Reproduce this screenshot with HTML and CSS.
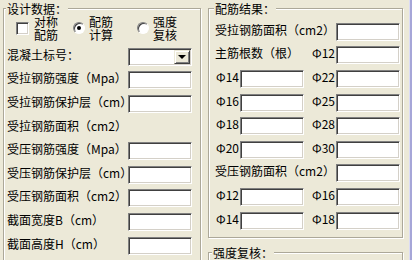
FILE: index.html
```html
<!DOCTYPE html>
<html lang="zh-CN">
<head>
    <meta charset="UTF-8">
    <meta name="viewport" content="width=device-width, initial-scale=1.0">
    <title>配筋计算</title>
    <link rel="stylesheet" href="styles.css">
</head>
<body>
    <div class="window">
        <fieldset class="group group-design">
            <legend>设计数据：</legend>
            <div class="options">
                <label class="option"><span class="check"></span><span class="option-text">对称<br>配筋</span></label>
                <label class="option"><span class="radio checked"></span><span class="option-text">配筋<br>计算</span></label>
                <label class="option"><span class="radio"></span><span class="option-text">强度<br>复核</span></label>
            </div>

            <div class="form">
                <span class="label">混凝土标号：</span>
                <span class="field combo"><span class="combo-btn"><span class="arrow"></span></span></span>

                <span class="label">受拉钢筋强度（Mpa）</span>
                <span class="field"></span>

                <span class="label">受拉钢筋保护层（cm）</span>
                <span class="field"></span>

                <span class="label wide">受拉钢筋面积（cm2）</span>

                <span class="label">受压钢筋强度（Mpa）</span>
                <span class="field"></span>

                <span class="label">受压钢筋保护层（cm）</span>
                <span class="field"></span>

                <span class="label">受压钢筋面积（cm2）</span>
                <span class="field"></span>

                <span class="label">截面宽度B（cm）</span>
                <span class="field"></span>

                <span class="label">截面高度H（cm）</span>
                <span class="field"></span>
            </div>
        </fieldset>

        <div class="side">
            <fieldset class="group group-result">
                <legend>配筋结果：</legend>
                <div class="result">
                    <span class="label span-3">受拉钢筋面积（cm2）</span>
                    <span class="field"></span>

                    <span class="label span-2">主筋根数（根）</span>
                    <span class="phi phi-right">Φ12</span>
                    <span class="field"></span>

                    <span class="phi">Φ14</span>
                    <span class="field"></span>
                    <span class="phi phi-right">Φ22</span>
                    <span class="field"></span>

                    <span class="phi">Φ16</span>
                    <span class="field"></span>
                    <span class="phi phi-right">Φ25</span>
                    <span class="field"></span>

                    <span class="phi">Φ18</span>
                    <span class="field"></span>
                    <span class="phi phi-right">Φ28</span>
                    <span class="field"></span>

                    <span class="phi">Φ20</span>
                    <span class="field"></span>
                    <span class="phi phi-right">Φ30</span>
                    <span class="field"></span>

                    <span class="label span-3">受压钢筋面积（cm2）</span>
                    <span class="field"></span>

                    <span class="phi">Φ12</span>
                    <span class="field"></span>
                    <span class="phi phi-right">Φ16</span>
                    <span class="field"></span>

                    <span class="phi">Φ14</span>
                    <span class="field"></span>
                    <span class="phi phi-right">Φ18</span>
                    <span class="field"></span>
                </div>
            </fieldset>

            <fieldset class="group group-check">
                <legend>强度复核：</legend>
            </fieldset>
        </div>

        <div class="frame-edge"></div>
    </div>
</body>
</html>
```

FILE: styles.css
```css
* {
    margin: 0;
    padding: 0;
    box-sizing: border-box;
}

html, body {
    width: 412px;
    height: 260px;
    overflow: hidden;
}

body {
    font-family: "Noto Sans CJK SC", "Liberation Sans", sans-serif;
    font-size: 12px;
    color: #000;
    background: #ece9d8;
}

.window {
    display: flex;
    height: 260px;
    padding-left: 3px;
}

/* group boxes */
.group {
    border: 1px solid #aca899;
    box-shadow: inset 1px 1px 0 #fff, 1px 1px 0 #fff;
}

.group legend {
    line-height: 14px;
    padding: 2px 1px 0;
    margin-left: -1px;
    background: #ece9d8;
}

.group-design {
    width: 198px;
    height: 290px;
    margin-right: 7px;
    padding: 0 0 0 3px;
}

.side {
    display: flex;
    flex-direction: column;
    width: 195px;
}

.group-result {
    padding: 2px 0 7px 6px;
}

.group-check {
    height: 40px;
    margin-top: 6px;
    padding-left: 6px;
}

.group-check legend {
    margin-left: -3px;
}

/* option buttons */
.options {
    display: grid;
    grid-template-columns: 57px 64px auto;
    padding-left: 9px;
    margin-top: -1px;
}

.option {
    display: flex;
    align-items: center;
}

.option-text {
    line-height: 13px;
}

.check {
    width: 13px;
    height: 13px;
    margin-right: 5px;
    background: #fff;
    border: 1px solid;
    border-color: #808080 #fff #fff #808080;
    box-shadow: inset 1px 1px 0 #404040, inset -1px -1px 0 #d4d0c8;
}

.radio {
    position: relative;
    width: 12px;
    height: 12px;
    margin-right: 4px;
    background: #fff;
    border: 1px solid;
    border-color: #808080 #fff #fff #808080;
    border-radius: 50%;
    box-shadow: inset 1px 1px 0 #404040;
}

.radio.checked::after {
    content: "";
    position: absolute;
    left: 3px;
    top: 3px;
    width: 4px;
    height: 4px;
    border-radius: 50%;
    background: #000;
}

/* rows */
.form {
    display: grid;
    grid-template-columns: 121px 64px;
    grid-auto-rows: 23.6px;
    align-items: center;
    margin-top: 2px;
}

.result {
    display: grid;
    grid-template-columns: 25px 64px 32px 64px;
    grid-auto-rows: 23.6px;
    align-items: center;
}

.label {
    line-height: 14px;
    white-space: nowrap;
}

.label.wide {
    grid-column: 1 / -1;
}

.span-3 {
    grid-column: 1 / 4;
}

.span-2 {
    grid-column: 1 / 3;
}

.phi {
    line-height: 14px;
    padding-left: 1px;
    white-space: nowrap;
}

.phi-right {
    text-align: right;
    padding: 0 1px 0 0;
}

.field {
    display: block;
    height: 18px;
    margin-top: 4px;
    background: #fff;
    border: 1px solid;
    border-color: #808080 #fff #fff #808080;
    box-shadow: inset 1px 1px 0 #404040, inset -1px -1px 0 #d4d0c8;
}

.combo {
    display: flex;
    justify-content: flex-end;
    padding: 1px;
}

.combo-btn {
    display: flex;
    align-items: center;
    justify-content: center;
    width: 16px;
    height: 14px;
    background: #ece9d8;
    border: 1px solid;
    border-color: #ece9d8 #404040 #404040 #ece9d8;
    box-shadow: inset 1px 1px 0 #fff, inset -1px -1px 0 #808080;
}

.arrow {
    width: 0;
    height: 0;
    border-left: 4px solid transparent;
    border-right: 4px solid transparent;
    border-top: 4px solid #000;
}

.frame-edge {
    width: 3px;
    margin-left: auto;
    background: #a6a6d8;
    border-left: 1px solid #dcdcf4;
}
```
